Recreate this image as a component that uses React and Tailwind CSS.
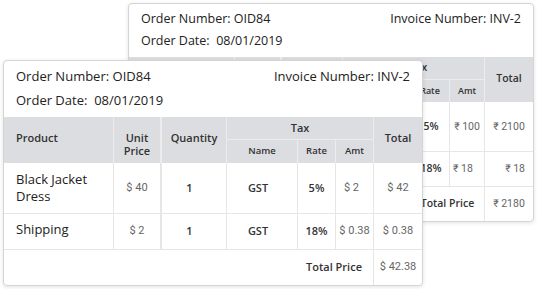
import React from "react";

const hdr = "bg-[#dcdde1] border-[#ececee] text-[#333] font-semibold";
const bodyB = "border-[#e6e6e6]";
const num = "font-['Roboto','Noto_Sans',sans-serif] text-[#666]";

function FrontCard() {
  return (
    <div className="absolute left-[3px] top-[60px] w-[420px] rounded-[4px] border border-[#d5d5d5] bg-white shadow-[0_1px_4px_rgba(0,0,0,0.12)] overflow-hidden font-['Open_Sans',sans-serif] text-[#222]">
      <div className="flex justify-between px-[12px] pt-[3px] pb-[5px] text-[13px] leading-[24px]">
        <div>
          <div>Order Number: OID84</div>
          <div>Order Date:{"\u00a0 "}08/01/2019</div>
        </div>
        <div>Invoice Number: INV-2</div>
      </div>
      <div className="grid grid-cols-[110px_48px_65px_71px_38px_38px_48px] grid-rows-[23px_23px_51px_36px_35px]">
        {/* header */}
        <div className={`${hdr} row-span-2 border-r text-[11px] leading-[13px] pt-[14px] pl-[12px]`}>Product</div>
        <div className={`${hdr} row-span-2 border-r-2 text-[11px] leading-[13px] pt-[14px] text-center`}>Unit<br />Price</div>
        <div className={`${hdr} row-span-2 border-r text-[11px] leading-[13px] pt-[14px] text-center`}>Quantity</div>
        <div className={`${hdr} col-span-3 border-r border-b text-[11px] flex items-center justify-center`}>Tax</div>
        <div className={`${hdr} row-span-2 text-[11px] leading-[13px] pt-[14px] text-center`}>Total</div>
        <div className={`${hdr} border-r text-[9.5px] font-normal flex items-center justify-center`}>Name</div>
        <div className={`${hdr} border-r text-[9.5px] font-normal flex items-center justify-center`}>Rate</div>
        <div className={`${hdr} border-r text-[9.5px] font-normal flex items-center justify-center`}>Amt</div>

        {/* row 1 */}
        <div className={`${bodyB} border-r border-b flex items-center pl-[12px] pr-2 text-[13px] leading-[17px]`}>Black Jacket Dress</div>
        <div className={`${bodyB} border-r-2 border-b flex items-center justify-center text-[11px] ${num}`}>$ 40</div>
        <div className={`${bodyB} border-r border-b flex items-center justify-center pr-[9px] text-[11px] font-semibold text-[#333]`}>1</div>
        <div className={`${bodyB} border-r border-b flex items-center justify-center pr-[8px] text-[11px] font-semibold text-[#333]`}>GST</div>
        <div className={`${bodyB} border-r border-b flex items-center justify-center text-[11px] font-semibold text-[#333]`}>5%</div>
        <div className={`${bodyB} border-r border-b flex items-center justify-center pr-[6px] text-[11px] ${num}`}>$ 2</div>
        <div className={`${bodyB} border-b flex items-center justify-center text-[11px] ${num}`}>$ 42</div>

        {/* row 2 */}
        <div className={`${bodyB} border-r border-b flex items-center pl-[12px] text-[13px] leading-[17px] pb-[4px]`}>Shipping</div>
        <div className={`${bodyB} border-r-2 border-b flex items-center justify-center text-[11px] ${num}`}>$ 2</div>
        <div className={`${bodyB} border-r border-b flex items-center justify-center pr-[9px] text-[11px] font-semibold text-[#333]`}>1</div>
        <div className={`${bodyB} border-r border-b flex items-center justify-center pr-[8px] text-[11px] font-semibold text-[#333]`}>GST</div>
        <div className={`${bodyB} border-r border-b flex items-center justify-center text-[11px] font-semibold text-[#333]`}>18%</div>
        <div className={`${bodyB} border-r border-b flex items-center justify-center text-[11px] ${num}`}>$ 0.38</div>
        <div className={`${bodyB} border-b flex items-center justify-center text-[11px] ${num}`}>$ 0.38</div>

        {/* total row */}
        <div className="col-span-4"></div>
        <div className={`${bodyB} col-span-2 border-r flex items-center justify-center pr-[3px] text-[11px] font-semibold text-[#333]`}>Total Price</div>
        <div className={`flex items-center justify-center text-[11px] ${num}`}>$ 42.38</div>
      </div>
    </div>
  );
}

function BackCard() {
  return (
    <div className="absolute left-[128px] top-[3px] w-[406px] rounded-[4px] border border-[#d5d5d5] bg-white shadow-[0_1px_4px_rgba(0,0,0,0.12)] overflow-hidden font-['Open_Sans',sans-serif] text-[#222]">
      <div className="flex justify-between px-[12px] pt-[4px] pb-[5px] text-[12.5px] leading-[22px]">
        <div>
          <div>Order Number: OID84</div>
          <div>Order Date:{"\u00a0 "}08/01/2019</div>
        </div>
        <div>Invoice Number: INV-2</div>
      </div>
      <div className="grid grid-cols-[106px_47px_61px_68px_39px_35px_48px] grid-rows-[23px_22px_50px_35px_34px]">
        <div className={`${hdr} row-span-2 border-r text-[10.5px] leading-[12px] pt-[15px] pl-[12px]`}>Product</div>
        <div className={`${hdr} row-span-2 border-r-2 text-[10.5px] leading-[12px] pt-[15px] text-center`}>Unit<br />Price</div>
        <div className={`${hdr} row-span-2 border-r text-[10.5px] leading-[12px] pt-[15px] text-center`}>Quantity</div>
        <div className={`${hdr} col-span-3 border-r border-b text-[10.5px] flex items-center justify-center pl-[10px]`}>Tax</div>
        <div className={`${hdr} row-span-2 text-[10.5px] leading-[12px] pt-[15px] text-center`}>Total</div>
        <div className={`${hdr} border-r text-[9px] font-normal flex items-center justify-center`}>Name</div>
        <div className={`${hdr} border-r text-[9px] font-normal flex items-center justify-center`}>Rate</div>
        <div className={`${hdr} border-r text-[9px] font-normal flex items-center justify-center`}>Amt</div>

        <div className={`${bodyB} border-r border-b flex items-center pl-[12px] pr-2 text-[12.5px] leading-[16px]`}>Black Jacket Dress</div>
        <div className={`${bodyB} border-r-2 border-b flex items-center justify-center text-[10.5px] ${num}`}>₹ 2000</div>
        <div className={`${bodyB} border-r border-b flex items-center justify-center pr-[8px] text-[10.5px] font-semibold text-[#333]`}>1</div>
        <div className={`${bodyB} border-r border-b flex items-center justify-center pr-[8px] text-[10.5px] font-semibold text-[#333]`}>GST</div>
        <div className={`${bodyB} border-r border-b flex items-center justify-center pl-[2px] text-[10.5px] font-semibold text-[#333]`}>5%</div>
        <div className={`${bodyB} border-r border-b flex items-center justify-center text-[10.5px] ${num}`}>₹ 100</div>
        <div className={`${bodyB} border-b flex items-center justify-center text-[10.5px] ${num}`}>₹ 2100</div>

        <div className={`${bodyB} border-r border-b flex items-center pl-[12px] text-[12.5px] leading-[16px] pb-[4px]`}>Shipping</div>
        <div className={`${bodyB} border-r-2 border-b flex items-center justify-center text-[10.5px] ${num}`}>₹ 100</div>
        <div className={`${bodyB} border-r border-b flex items-center justify-center pr-[8px] text-[10.5px] font-semibold text-[#333]`}>1</div>
        <div className={`${bodyB} border-r border-b flex items-center justify-center pr-[8px] text-[10.5px] font-semibold text-[#333]`}>GST</div>
        <div className={`${bodyB} border-r border-b flex items-center justify-center pl-[2px] text-[10.5px] font-semibold text-[#333]`}>18%</div>
        <div className={`${bodyB} border-r border-b flex items-center pl-[3px] text-[10.5px] ${num}`}>₹ 18</div>
        <div className={`${bodyB} border-b flex items-center justify-end pr-[8px] text-[10.5px] ${num}`}>₹ 18</div>

        <div className="col-span-4"></div>
        <div className={`${bodyB} col-span-2 border-r flex items-center justify-center text-[10.5px] font-semibold text-[#333]`}>Total Price</div>
        <div className={`flex items-center justify-center text-[10.5px] ${num}`}>₹ 2180</div>
      </div>
    </div>
  );
}

export default function App() {
  return (
    <div className="relative w-[537px] h-[289px] bg-white overflow-hidden">
      <BackCard />
      <FrontCard />
    </div>
  );
}
